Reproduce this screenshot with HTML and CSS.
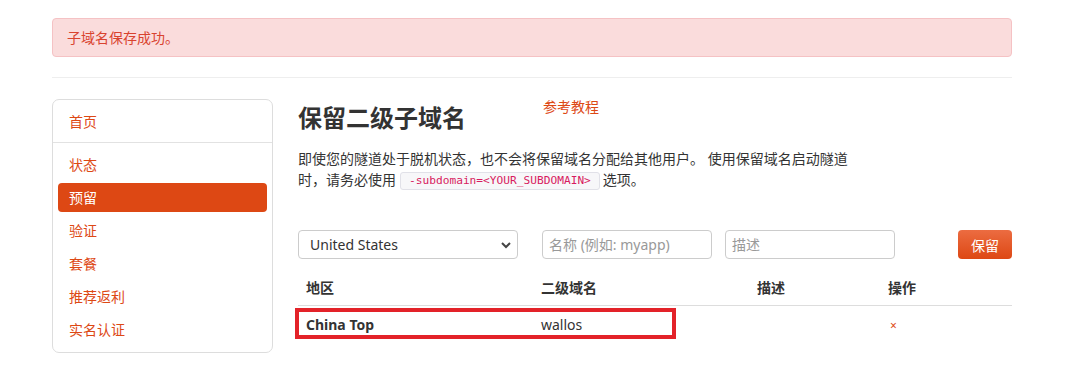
FILE: index.html
```html
<!DOCTYPE html>
<html lang="zh-CN">

<head>
    <meta charset="UTF-8">
    <title>保留二级子域名</title>
    <link rel="stylesheet" href="styles.css">
</head>

<body>
    <div class="container">
        <div class="alert">子域名保存成功。</div>
        <hr class="divider">

        <div class="layout">
            <div class="sidebar">
                <a href="#" class="nav-item">首页</a>
                <div class="nav-sep"></div>
                <div class="nav-list">
                    <a href="#" class="nav-item">状态</a>
                    <a href="#" class="nav-item active">预留</a>
                    <a href="#" class="nav-item">验证</a>
                    <a href="#" class="nav-item">套餐</a>
                    <a href="#" class="nav-item">推荐返利</a>
                    <a href="#" class="nav-item">实名认证</a>
                </div>
            </div>

            <div class="main">
                <div class="title-row">
                    <h2 class="title">保留二级子域名</h2>
                    <a href="#" class="doc-link">参考教程</a>
                </div>
                <p class="desc">即使您的隧道处于脱机状态，也不会将保留域名分配给其他用户。 使用保留域名启动隧道时，请务必使用<code class="code">-subdomain=&lt;YOUR_SUBDOMAIN&gt;</code>选项。</p>

                <div class="form-row">
                    <div class="select">
                        <span>United States</span>
                        <svg width="12" height="8" viewBox="0 0 12 8"><path d="M2 2l4 4 4-4" fill="none" stroke="#444" stroke-width="2"/></svg>
                    </div>
                    <input class="field field-name" placeholder="名称 (例如: myapp)">
                    <input class="field field-desc" placeholder="描述">
                    <button class="btn">保留</button>
                </div>

                <div class="table">
                    <div class="row head">
                        <div class="cell c1">地区</div>
                        <div class="cell c2">二级域名</div>
                        <div class="cell c3">描述</div>
                        <div class="cell c4">操作</div>
                    </div>
                    <div class="row body">
                        <div class="cell c1 strong">China Top</div>
                        <div class="cell c2">wallos</div>
                        <div class="cell c3"></div>
                        <div class="cell c4"><span class="remove">×</span></div>
                        <div class="mark"></div>
                    </div>
                </div>
            </div>
        </div>
    </div>
</body>
</html>
```

FILE: styles.css
```css
* {
    margin: 0;
    padding: 0;
    box-sizing: border-box;
}

body {
    background: #fff;
    color: #333;
    font-family: "Noto Sans", "Noto Sans CJK SC", sans-serif;
    font-size: 14px;
}

.container {
    width: 960px;
    margin-left: 52px;
    padding-top: 18px;
}

.alert {
    height: 39px;
    background-color: #fadcdc;
    border: 1px solid #f5c2c4;
    border-radius: 4px;
    color: #d9432f;
    padding: 0 14px;
    line-height: 37px;
}

.divider {
    border: none;
    border-top: 1px solid #eee;
    margin: 20px 0 21px;
}

.layout {
    display: flex;
    align-items: flex-start;
}

.sidebar {
    width: 221px;
    height: 254px;
    border: 1px solid #ddd;
    border-radius: 7px;
    padding-top: 7px;
}

.nav-item {
    display: block;
    height: 29px;
    line-height: 29px;
    padding-left: 16px;
    color: #dd4814;
    text-decoration: none;
    font-size: 14px;
}

.sidebar > .nav-item {
    margin-bottom: 6px;
}

.nav-sep {
    border-top: 1px solid #e2e2e2;
    margin-bottom: 7px;
}

.nav-list {
    display: flex;
    flex-direction: column;
    gap: 4px;
    padding: 0 5px;
}

.nav-list .nav-item {
    padding-left: 11px;
    border-radius: 4px;
}

.nav-item.active {
    background-color: #dd4814;
    color: #fff;
}

.main {
    margin-left: 25px;
    flex: 1;
    position: relative;
}

.title-row {
    display: flex;
    align-items: flex-start;
}

.title {
    font-size: 24px;
    font-weight: bold;
    color: #333;
    line-height: 34px;
    margin-top: 2px;
}

.doc-link {
    color: #dd4814;
    text-decoration: none;
    margin-left: 77px;
    line-height: 16px;
}

.desc {
    width: 556px;
    line-height: 21px;
    margin-top: 13px;
}

.code {
    font-family: "DejaVu Sans Mono", monospace;
    font-size: 11.2px;
    line-height: 13px;
    color: #d81b60;
    background: #f7f7f9;
    border: 1px solid #e1e1e8;
    border-radius: 3px;
    padding: 1px 8px 2px;
    margin: 0 3px 0 4px;
    display: inline-block;
    vertical-align: 1px;
}

.form-row {
    display: flex;
    align-items: center;
    margin-top: 40px;
    height: 29px;
}

.select {
    width: 220px;
    height: 29px;
    border: 1px solid #ccc;
    border-radius: 4px;
    display: flex;
    align-items: center;
    justify-content: space-between;
    padding: 0 5px 0 11px;
    color: #333;
    font-size: 14px;
}

.field {
    width: 170px;
    height: 29px;
    border: 1px solid #ccc;
    border-radius: 4px;
    padding: 0 6px;
    font-family: "Noto Sans", "Noto Sans CJK SC", sans-serif;
    font-size: 14px;
    outline: none;
}

.field::placeholder {
    color: #999;
}

.field-name {
    margin-left: 24px;
}

.field-desc {
    margin-left: 13px;
}

.btn {
    margin-left: auto;
    width: 54px;
    height: 29px;
    border: none;
    border-radius: 4px;
    background: linear-gradient(#ec6c41, #dd4814);
    color: #fff;
    font-family: "Noto Sans", "Noto Sans CJK SC", sans-serif;
    font-size: 14px;
}

.table {
    margin-top: 9px;
}

.row {
    display: flex;
    position: relative;
}

.row.head {
    height: 38px;
    align-items: center;
    border-bottom: 1px solid #ddd;
    font-weight: bold;
}

.row.body {
    height: 37px;
    align-items: center;
}

.cell {
    padding: 0 8px;
}

.c1 { width: 235px; }
.c2 { width: 216px; }
.c3 { width: 131px; }
.c4 { width: 131px; }

.strong {
    font-weight: bold;
}

.remove {
    color: #dd4814;
    font-size: 12px;
    padding-left: 2px;
}

.mark {
    position: absolute;
    left: -3px;
    top: 2px;
    width: 381px;
    height: 31px;
    border: 4px solid #e32229;
}
```
